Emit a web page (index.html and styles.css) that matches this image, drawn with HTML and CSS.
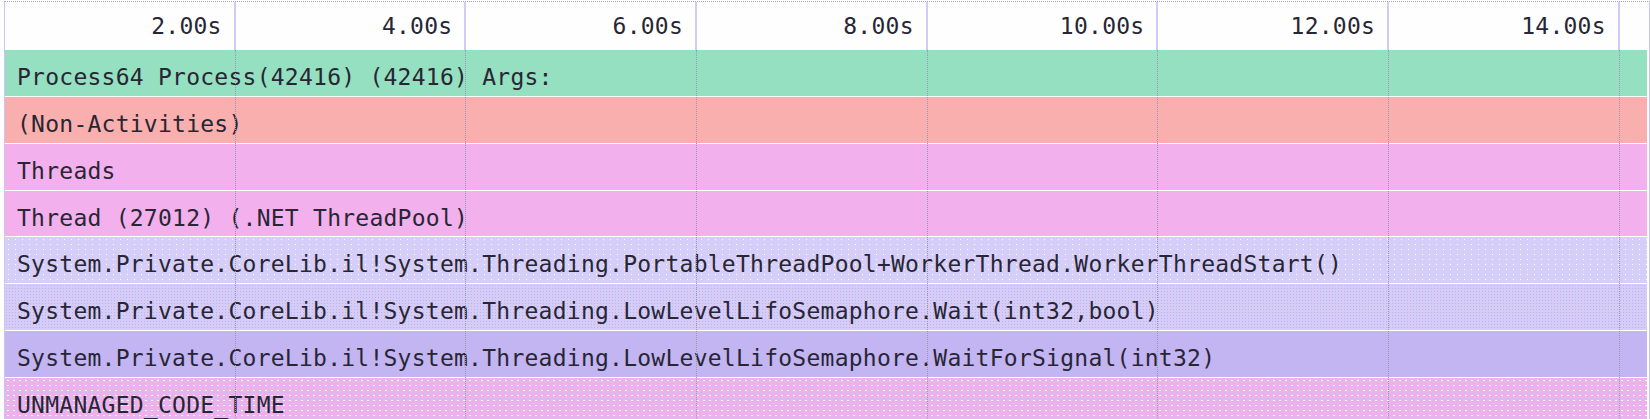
FILE: index.html
```html
<!DOCTYPE html>
<html>
<head>
<meta charset="utf-8">
<link rel="stylesheet" href="styles.css">
</head>
<body>
<div class="timeline">
  <div class="ruler">
    <div class="tick">2.00s</div>
    <div class="tick">4.00s</div>
    <div class="tick">6.00s</div>
    <div class="tick">8.00s</div>
    <div class="tick">10.00s</div>
    <div class="tick">12.00s</div>
    <div class="tick">14.00s</div>
    <div class="tick tail"></div>
  </div>
  <div class="tracks">
    <div class="row green">Process64 Process(42416) (42416) Args:</div>
    <div class="row salmon">(Non-Activities)</div>
    <div class="row pink">Threads</div>
    <div class="row pink">Thread (27012) (.NET ThreadPool)</div>
    <div class="row lav-sparse">System.Private.CoreLib.il!System.Threading.PortableThreadPool+WorkerThread.WorkerThreadStart()</div>
    <div class="row lav-dense">System.Private.CoreLib.il!System.Threading.LowLevelLifoSemaphore.Wait(int32,bool)</div>
    <div class="row purple">System.Private.CoreLib.il!System.Threading.LowLevelLifoSemaphore.WaitForSignal(int32)</div>
    <div class="row pink-dots">UNMANAGED_CODE_TIME</div>
    <div class="gridlines">
      <div class="gl"></div><div class="gl"></div><div class="gl"></div><div class="gl"></div>
      <div class="gl"></div><div class="gl"></div><div class="gl"></div>
    </div>
  </div>
</div>
</body>
</html>
```
FILE: styles.css
```css
html, body {
  margin: 0;
  padding: 0;
  background: #ffffff;
  overflow: hidden;
}

.timeline {
  margin: 1px 0 0 4px;
  border-top: 1px dotted #a59fc4;
  border-left: 1px solid #cbc6ee;
  border-right: 1px solid #cbc6ee;
  height: 420px;
  font-family: "DejaVu Sans Mono", "Liberation Mono", monospace;
  font-size: 23px;
  letter-spacing: 0.25px;
  color: #282634;
}

.ruler {
  display: grid;
  grid-template-columns: repeat(7, 230.7px) 1fr;
  height: 48px;
  background: #fefeff;
}

.tick {
  border-right: 2px solid #d3cbf6;
  text-align: right;
  padding-right: 12px;
  line-height: 27px;
  padding-top: 11px;
}

.tick.tail {
  border-right: none;
}

.tracks {
  position: relative;
  display: flex;
  flex-direction: column;
  gap: 1px;
  margin-right: 2px;
}

.row {
  height: 45.86px;
  box-sizing: border-box;
  padding: 14px 0 0 12px;
  line-height: 27px;
  white-space: nowrap;
  overflow: hidden;
}

.green { background: #95e0c0; }
.salmon { background: #f9afae; }
.pink { background: #f2b0ec; }
.purple { background: #c2b5f2; }

.lav-sparse {
  background-color: #d5cef8;
  background-image:
    radial-gradient(circle, rgba(255,255,255,0.95) 0.7px, transparent 0.9px),
    radial-gradient(circle, rgba(246,190,238,0.9) 0.7px, transparent 0.9px);
  background-size: 7px 5px, 11px 7px;
  background-position: 0 0, 3px 2px;
}

.lav-dense {
  background-color: #d3cdf8;
  background-image:
    radial-gradient(circle, rgba(180,170,238,0.8) 0.6px, transparent 0.8px),
    radial-gradient(circle, rgba(240,190,236,0.6) 0.6px, transparent 0.8px);
  background-size: 3px 3px, 5px 4px;
  background-position: 0 0, 1px 2px;
}

.pink-dots {
  background-color: #efb0ec;
  background-image:
    radial-gradient(circle, rgba(255,255,255,0.95) 0.7px, transparent 0.9px),
    radial-gradient(circle, rgba(200,190,245,0.9) 0.7px, transparent 0.9px);
  background-size: 6px 5px, 4px 3px;
  background-position: 0 0, 2px 1px;
}

.gridlines {
  position: absolute;
  inset: 0;
  display: grid;
  grid-template-columns: repeat(7, 230.7px) 1fr;
  pointer-events: none;
}

.gl {
  border-right: 1px dotted #9a96b4;
}
```
